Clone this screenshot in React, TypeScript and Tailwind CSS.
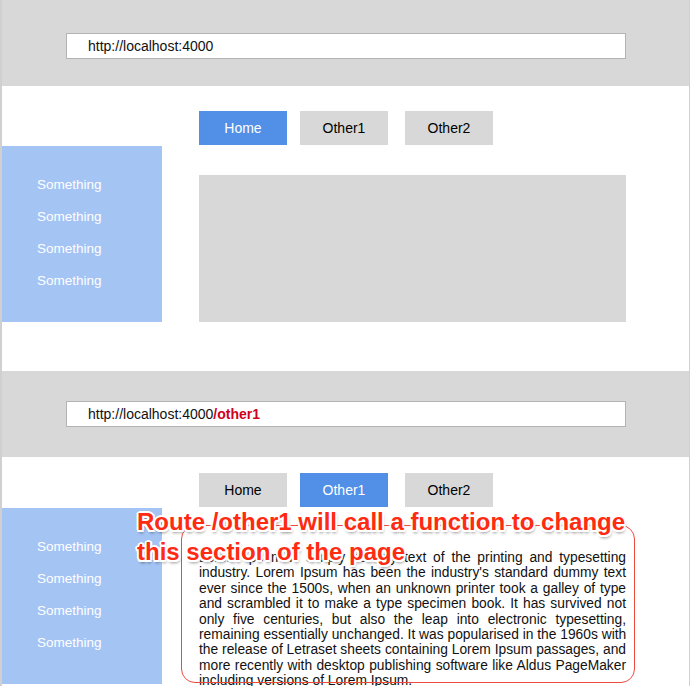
import React from "react";

// lines broken as in the mockup
const loremLines = [
  "Lorem Ipsum is simply dummy text of the printing and typesetting",
  "industry. Lorem Ipsum has been the industry's standard dummy text",
  "ever since the 1500s, when an unknown printer took a galley of type",
  "and scrambled it to make a type specimen book. It has survived not",
  "only five centuries, but also the leap into electronic typesetting,",
  "remaining essentially unchanged. It was popularised in the 1960s with",
  "the release of Letraset sheets containing Lorem Ipsum passages, and",
  "more recently with desktop publishing software like Aldus PageMaker",
  "including versions of Lorem Ipsum.",
];

function NavButton({ label, active }: { label: string; active?: boolean }) {
  return (
    <div
      className={
        active
          ? "flex h-[34px] w-[88px] items-center justify-center bg-[#5190e6] text-white"
          : "flex h-[34px] w-[88px] items-center justify-center bg-[#d8d8d8] text-black"
      }
    >
      {label}
    </div>
  );
}

function Screen({
  path,
  active,
  barTop,
  gapTop,
  children,
}: {
  path?: string;
  active: string;
  barTop: string;
  gapTop: string;
  children: React.ReactNode;
}) {
  return (
    <div>
      <div className={`flex h-[86px] items-start bg-[#d8d8d8] pl-[64px] ${barTop}`}>
        <div className="flex h-[26px] w-[560px] items-center border border-[#b3b3b3] bg-white pl-[21px] text-[14px] text-[#111]">
          http://localhost:4000
          {path && <span className="font-bold text-[#d0021b]">{path}</span>}
        </div>
      </div>
      <div className={`flex ${gapTop}`}>
        <div className="mt-[35px] h-[176px] w-[160px] bg-[#a4c4f4] pt-[23px] pl-[35px] text-[13.5px] text-white">
          {[0, 1, 2, 3].map((i) => (
            <div key={i} className="flex h-[32px] items-center">
              Something
            </div>
          ))}
        </div>
        <div className="ml-[37px] flex flex-col">
          <div className="flex gap-[13px] text-[14px]">
            <NavButton label="Home" active={active === "Home"} />
            <NavButton label="Other1" active={active === "Other1"} />
            <div className="ml-[4px]">
              <NavButton label="Other2" active={active === "Other2"} />
            </div>
          </div>
          {children}
        </div>
      </div>
    </div>
  );
}

export default function App() {
  return (
    <div
      className="relative h-[686px] w-[690px] overflow-hidden border-l-2 border-r border-[#d0d0d0] bg-white"
      style={{ fontFamily: '"Liberation Sans", Arial, Helvetica, sans-serif' }}
    >
      <Screen active="Home" barTop="pt-[33px]" gapTop="pt-[25px]">
        <div className="mt-[30px] h-[147px] w-[427px] bg-[#d8d8d8]" />
      </Screen>
      <div className="h-[49px]" />
      <Screen path="/other1" active="Other1" barTop="pt-[30px]" gapTop="pt-[16px]">
        <div className="mt-[43px] w-[427px] text-[13.8px] leading-[15.4px] text-[#111]">
          {loremLines.map((line, i) => (
            <div
              key={i}
              className={
                i < loremLines.length - 1
                  ? "whitespace-nowrap text-justify [text-align-last:justify]"
                  : "whitespace-nowrap"
              }
            >
              {line}
            </div>
          ))}
        </div>
      </Screen>

      {/* annotation overlay */}
      <div className="absolute left-[179px] top-[525px] h-[158px] w-[454px] rounded-[14px] border border-[#ee4a3c]" />
      <div
        className="absolute left-[135px] top-[507px] text-[24px] font-bold leading-[30px] text-[#ff2a12]"
        style={{
          textShadow:
            "-1.5px -1.5px 0 #fff, 1.5px -1.5px 0 #fff, -1.5px 1.5px 0 #fff, 1.5px 1.5px 0 #fff, 0 2px 0 #fff, 2px 0 0 #fff, -2px 0 0 #fff, 0 -2px 0 #fff, 1px 3px 3px rgba(0,0,0,0.45)",
        }}
      >
        <div>Route /other1 will call a function to change</div>
        <div>this section of the page</div>
      </div>
    </div>
  );
}
